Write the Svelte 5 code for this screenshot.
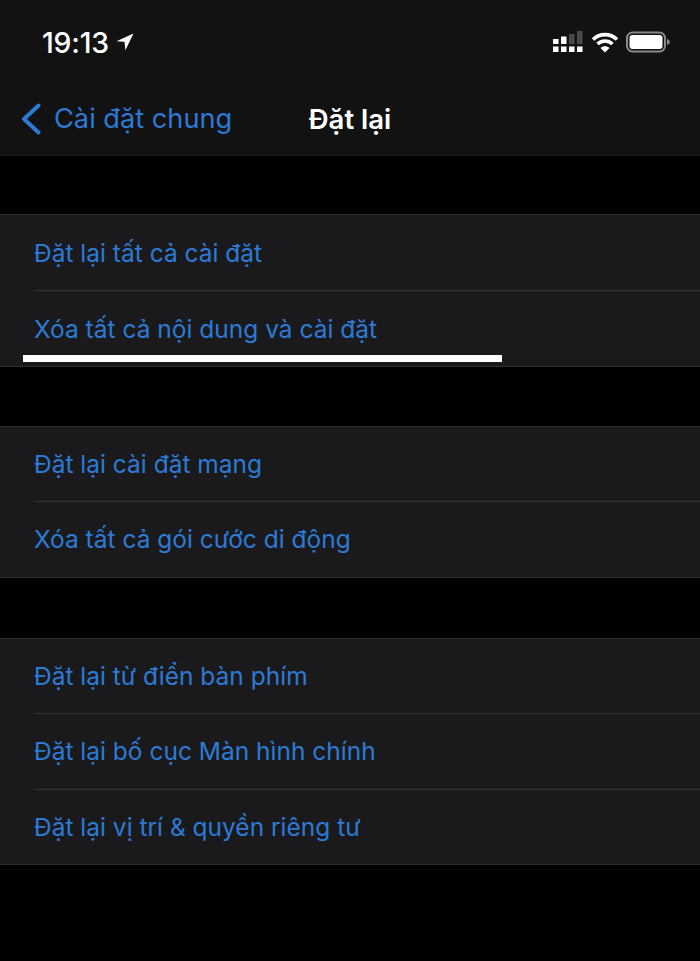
<script>
  const groups = [
    ['Đặt lại tất cả cài đặt', 'Xóa tất cả nội dung và cài đặt'],
    ['Đặt lại cài đặt mạng', 'Xóa tất cả gói cước di động'],
    ['Đặt lại từ điển bàn phím', 'Đặt lại bố cục Màn hình chính', 'Đặt lại vị trí & quyền riêng tư']
  ];
</script>

<div class="screen">
  <header class="header">
    <div class="status">
      <div class="clock">
        <span>19:13</span>
        <svg width="18" height="18" viewBox="0 0 18 18"><path d="M17.500 .5 .5 8.200l8 .6.9 8.400z" fill="#fff"/></svg>
      </div>
      <div class="indicators">
        <svg width="30" height="22" viewBox="0 0 30 22">
          <g fill="#fff">
            <rect x="0" y="8" width="5.500" height="5"/><rect x="8" y="5.500" width="5.500" height="7.500"/>
            <rect x="0" y="15.500" width="5.500" height="5.500"/><rect x="8" y="15.500" width="5.500" height="5.500"/>
            <rect x="16" y="15.500" width="5.500" height="5.500"/><rect x="24" y="15.500" width="5.500" height="5.500"/>
          </g>
          <g fill="#4a4a4a"><rect x="16" y="3" width="5.500" height="10"/><rect x="24" y="0" width="5.500" height="13"/></g>
        </svg>
        <svg width="28" height="21" viewBox="0 0 28 21" fill="none" stroke="#fff" stroke-width="3.600">
          <path d="M2 7.500c7-6.500 17-6.500 24 0"/>
          <path d="M6.500 12c4.500-4 10.500-4 15 0"/>
          <path d="M14 20.500l-4.500-4.600c2.600-2.100 6.400-2.100 9 0z" fill="#fff" stroke="none"/>
        </svg>
        <svg width="44" height="22" viewBox="0 0 44 22">
          <rect x="1" y="1.500" width="38" height="19" rx="5.500" fill="none" stroke="#8a8a8a" stroke-width="2"/>
          <rect x="3.500" y="4" width="33" height="14" rx="3" fill="#fff"/>
          <path d="M41 8c1.800.5 2.800 1.600 2.800 3s-1 2.500-2.800 3z" fill="#8a8a8a"/>
        </svg>
      </div>
    </div>
    <nav class="nav">
      <div class="back">
        <svg width="22" height="32" viewBox="0 0 22 32" fill="none" stroke="#2c7ad6" stroke-width="4" stroke-linecap="round" stroke-linejoin="round"><path d="M18.500 2.500 4 16l14.500 13.500"/></svg>
        <span>Cài đặt chung</span>
      </div>
      <div class="title">Đặt lại</div>
    </nav>
  </header>

  {#each groups as rows, g}
    <section class="group" class:first={g === 0}>
      {#each rows as label, i}
        <div class="row">
          <div class="label">{label}</div>
          {#if g === 0 && i === 1}<div class="mark"></div>{/if}
        </div>
      {/each}
    </section>
  {/each}
</div>

<style>
  :global(body) { margin: 0; background: #000; }
  .screen {
    width: 700px;
    height: 961px;
    background: #000;
    overflow: hidden;
    font-family: Inter, "Liberation Sans", sans-serif;
  }
  .header {
    height: 155px;
    background: #121212;
    border-bottom: 1px solid #1c1c1c;
    display: flex;
    flex-direction: column;
  }
  .status {
    height: 84px;
    padding: 0 30px 0 42px;
    display: flex;
    justify-content: space-between;
    align-items: center;
  }
  .clock {
    display: flex;
    align-items: center;
    gap: 7px;
    color: #fff;
    font-size: 28.4px;
    font-weight: 500;
    letter-spacing: -0.2px;
  }
  .indicators { display: flex; align-items: center; gap: 7.5px; }
  .nav {
    flex: 1;
    position: relative;
    display: flex;
    align-items: center;
    justify-content: center;
    padding-bottom: 2px;
  }
  .back {
    position: absolute;
    left: 20px;
    top: 0;
    bottom: 2px;
    display: flex;
    align-items: center;
    gap: 12px;
    color: #2c7ad6;
    font-size: 27.2px;
  }
  .title {
    color: #fff;
    font-size: 27.5px;
    font-weight: 600;
  }
  .group {
    margin-top: 60.2px;
    background: #1a1a1c;
    border-top: 1px solid #2c2c2e;
  }
  .group.first { margin-top: 58px; }
  .group.first + .group { margin-top: 59px; }
  .row {
    position: relative;
    padding-left: 34px;
    height: 75.4px;
    box-sizing: border-box;
  }
  .first .row { height: 76px; }
  .label {
    box-sizing: border-box;
    height: 100%;
    line-height: 74px;
    color: #2c7ad6;
    font-size: 24.5px;
    border-bottom: 1px solid #323234;
  }
  .first .label { line-height: 76px; }
  .row:last-child { padding-left: 0; }
  .row:last-child .label { padding-left: 34px; border-bottom-color: #2c2c2e; }
  .mark {
    position: absolute;
    left: 23px;
    bottom: 5px;
    width: 479px;
    height: 7px;
    background: #fff;
  }
</style>
